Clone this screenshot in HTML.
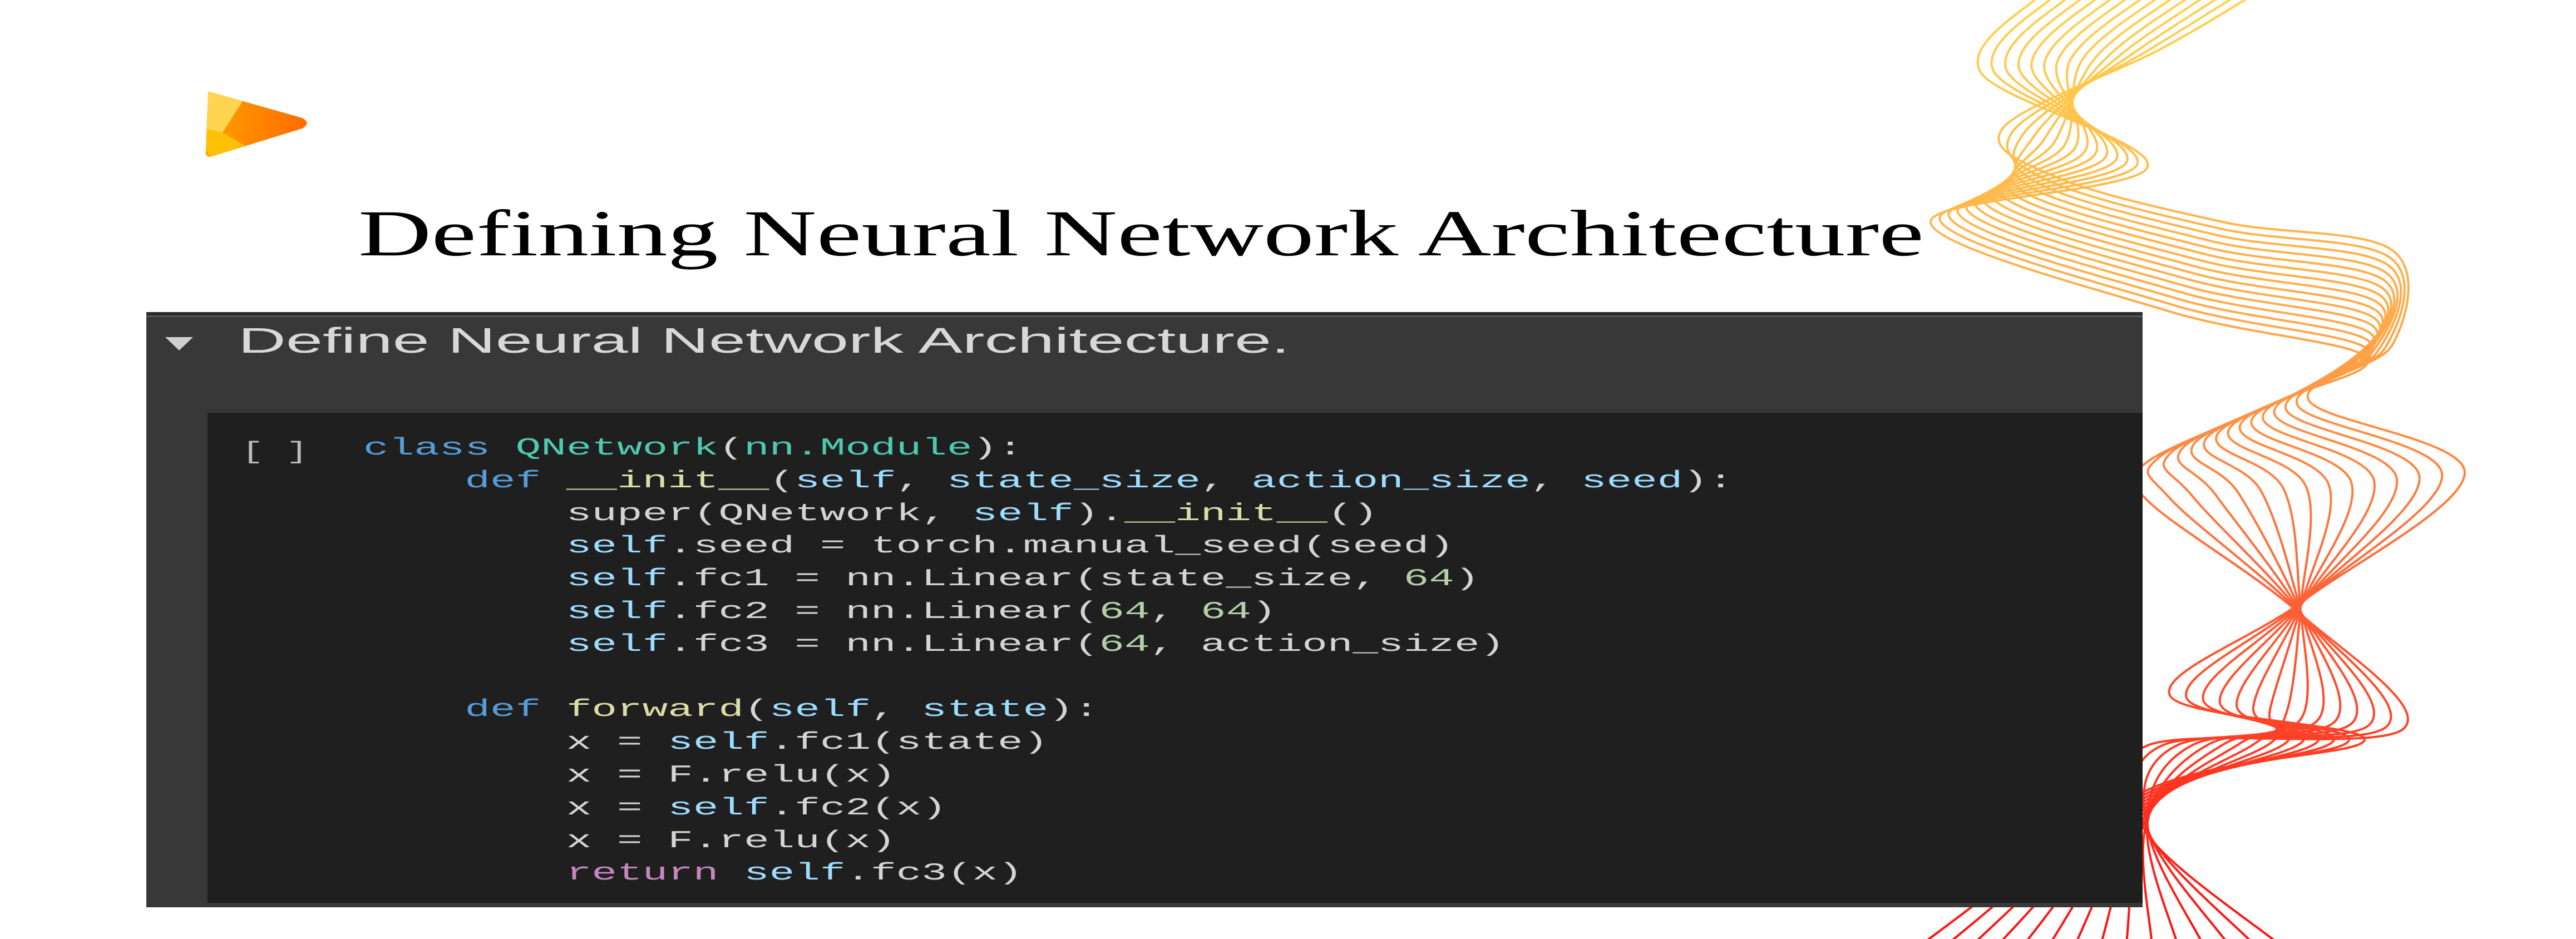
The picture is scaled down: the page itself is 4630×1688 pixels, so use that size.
<!DOCTYPE html>
<html><head><meta charset="utf-8"><style>
html,body{margin:0;padding:0;background:#fff;}
body{width:4630px;height:1688px;position:relative;overflow:hidden;}
.abs{position:absolute;}
#code{left:653px;top:777px;font-family:"Liberation Mono",monospace;font-size:44px;line-height:58.8px;white-space:pre;color:#d4d4d4;transform:scaleX(1.727);transform-origin:0 0;}
.k{color:#569cd6}.t{color:#4ec9b0}.f{color:#dcdcaa}.v{color:#9cdcfe}.n{color:#b5cea8}.r{color:#c586c0}
</style></head><body>
<svg class="abs" style="left:0;top:0" width="4630" height="1688" viewBox="0 0 4630 1688">
<defs>
<linearGradient id="wg" x1="0" y1="0" x2="0" y2="1688" gradientUnits="userSpaceOnUse">
<stop offset="0" stop-color="#ffd24d"/><stop offset="0.35" stop-color="#ffa94a"/><stop offset="0.6" stop-color="#ff6a3a"/><stop offset="1" stop-color="#ff1010"/>
</linearGradient>
<linearGradient id="lg" x1="372" y1="0" x2="555" y2="0" gradientUnits="userSpaceOnUse">
<stop offset="0" stop-color="#ffa000"/><stop offset="1" stop-color="#ff6a00"/>
</linearGradient>
</defs>
<g id="waves" fill="none" stroke="url(#wg)" stroke-width="4"></g>
<path d="M374,164 L543,212 Q560,221 543,231 L378,282 Q368,282 370,270 Z" fill="url(#lg)"/>
<polygon points="374,164 436,182 400,238 372,232" fill="#ffd54f"/>
<polygon points="372,232 400,238 440,262 378,282 370,270" fill="#ffc107"/>
<text x="644" y="459" font-family="Liberation Serif,serif" font-size="118" textLength="2814" lengthAdjust="spacingAndGlyphs" fill="#000">Defining Neural Network Architecture</text>
</svg>
<div class="abs" style="left:263px;top:561px;width:3588px;height:1070px;background:#383838;border-top:6px solid #2a2a2a;box-sizing:border-box;"></div>
<div class="abs" style="left:263px;top:567px;width:3588px;height:3px;background:#555;"></div>
<div class="abs" style="left:373px;top:742px;width:3478px;height:881px;background:#1f1f1f;"></div>
<svg class="abs" style="left:0;top:0" width="4630" height="1688">
<polygon points="297,606 347,606 322,630" fill="#d0d0d0"/>
<text x="428" y="634" font-family="Liberation Sans,sans-serif" font-size="64" textLength="1890" lengthAdjust="spacingAndGlyphs" fill="#d8d8d8">Define Neural Network Architecture.</text>
<text x="434" y="824" font-family="Liberation Mono,monospace" font-size="44" textLength="120" lengthAdjust="spacingAndGlyphs" fill="#bbb">[ ]</text>
</svg>
<div id="code" class="abs"><span class="k">class</span> <span class="t">QNetwork</span>(<span class="t">nn.Module</span>):
    <span class="k">def</span> <span class="f">__init__</span>(<span class="v">self</span>, <span class="v">state_size</span>, <span class="v">action_size</span>, <span class="v">seed</span>):
        super(QNetwork, <span class="v">self</span>).<span class="f">__init__</span>()
        <span class="v">self</span>.seed = torch.manual_seed(seed)
        <span class="v">self</span>.fc1 = nn.Linear(state_size, <span class="n">64</span>)
        <span class="v">self</span>.fc2 = nn.Linear(<span class="n">64</span>, <span class="n">64</span>)
        <span class="v">self</span>.fc3 = nn.Linear(<span class="n">64</span>, action_size)

    <span class="k">def</span> <span class="f">forward</span>(<span class="v">self</span>, <span class="v">state</span>):
        x = <span class="v">self</span>.fc1(state)
        x = F.relu(x)
        x = <span class="v">self</span>.fc2(x)
        x = F.relu(x)
        <span class="r">return</span> <span class="v">self</span>.fc3(x)</div>
<script>
(function(){
var A=[[3667,-10],[3560,130],[3860,300],[3470,400],[3900,560],[4250,640],[4100,720],[3860,830],[3860,900],[4130,1100],[4320,1310],[3860,1340],[3860,1500],[4100,1700]];
var B=[[4051,-10],[3880,90],[3600,230],[3700,320],[4000,400],[4300,450],[4300,620],[4150,720],[4430,850],[4140,1080],[3900,1250],[4250,1330],[3860,1420],[3450,1700]];
var g=document.getElementById('waves'),N=14,s='';
function cr(p){var d='M'+p[0][0]+','+p[0][1];
for(var i=0;i<p.length-1;i++){var p0=p[i>0?i-1:i],p1=p[i],p2=p[i+1],p3=p[i+2<p.length?i+2:i+1];
d+=' C'+(p1[0]+(p2[0]-p0[0])/6).toFixed(1)+','+(p1[1]+(p2[1]-p0[1])/6).toFixed(1)+' '+(p2[0]-(p3[0]-p1[0])/6).toFixed(1)+','+(p2[1]-(p3[1]-p1[1])/6).toFixed(1)+' '+p2[0].toFixed(1)+','+p2[1].toFixed(1);}
return d;}
for(var i=0;i<=N;i++){var a=i/N,p=[];
for(var j=0;j<A.length;j++)p.push([A[j][0]+(B[j][0]-A[j][0])*a,A[j][1]+(B[j][1]-A[j][1])*a]);
s+='<path d="'+cr(p)+'"/>';}
g.innerHTML=s;})();
</script>
</body></html>
